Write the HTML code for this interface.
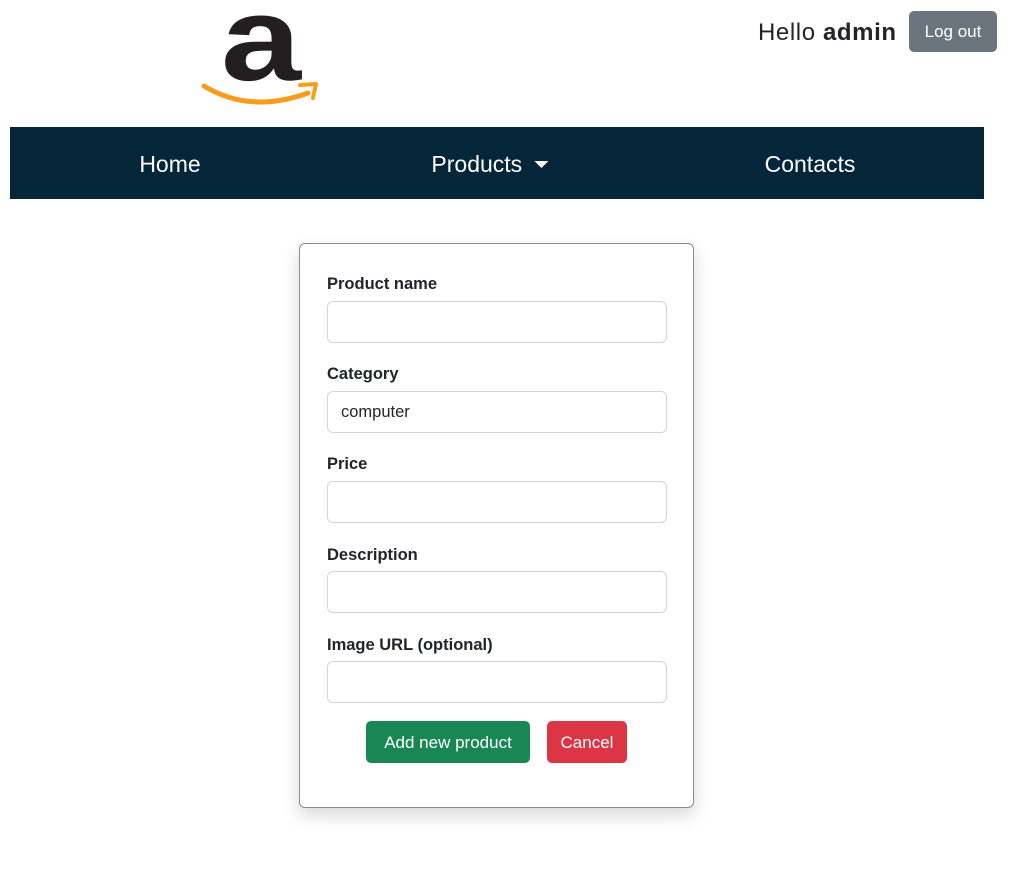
<!DOCTYPE html>
<html><head><style>
*{box-sizing:border-box;margin:0;padding:0}
body{width:1028px;height:884px;background:#fff;font-family:"Liberation Sans",sans-serif;color:#212529;position:relative;overflow:hidden}
.abs{position:absolute}
.nav{left:10px;top:127px;width:974px;height:72px;background:#052639}
.nav span{position:absolute;top:24px;color:#fff;font-size:23px;transform:translateX(-50%);white-space:nowrap}
.card{left:299px;top:243px;width:395px;height:565px;border:1px solid #8a8a8a;border-radius:6px;box-shadow:0 8px 18px rgba(0,0,0,.15);background:#fff}
.lbl{position:absolute;left:27px;font-weight:bold;font-size:16.5px}
.inp{position:absolute;left:27px;width:340px;height:42px;border:1px solid #ced4da;border-radius:6px;font-size:16.5px;padding:11px 13px}
.btn{position:absolute;top:477px;height:42px;border-radius:5px;color:#fff;font-size:17px;line-height:43px;text-align:center}
</style></head><body>
<svg class="abs" style="left:190px;top:0" width="140" height="115">
<text x="0" y="80" text-anchor="middle" font-family="Liberation Sans" font-weight="bold" font-size="120" fill="#231f20" transform="translate(71,0) scale(1.2,1)">a</text>
<path d="M14 86 Q60 114 118 93" stroke="#f79c1c" stroke-width="5" fill="none" stroke-linecap="round"/>
<path d="M110 85 L126 84 L123 98" stroke="#f79c1c" stroke-width="4" fill="none" stroke-linecap="round" stroke-linejoin="round"/>
</svg>
<div class="abs" style="left:758px;top:19px;font-size:24px;letter-spacing:0.6px">Hello <b>admin</b></div>
<div class="abs" style="left:909px;top:11px;width:88px;height:41px;background:#6c757d;border-radius:5px;color:#fff;font-size:17px;line-height:41px;text-align:center">Log out</div>
<div class="abs nav">
<span style="left:160px">Home</span>
<span style="left:480px">Products <span style="position:relative;left:0;top:-4px;display:inline-block;width:0;height:0;border-left:7px solid transparent;border-right:7px solid transparent;border-top:7px solid #fff;transform:none;margin-left:6px"></span></span>
<span style="left:800px">Contacts</span>
</div>
<div class="abs card">
<div class="lbl" style="top:31px">Product name</div>
<div class="inp" style="top:57px"></div>
<div class="lbl" style="top:121px">Category</div>
<div class="inp" style="top:147px">computer</div>
<div class="lbl" style="top:211px">Price</div>
<div class="inp" style="top:237px"></div>
<div class="lbl" style="top:302px">Description</div>
<div class="inp" style="top:327px"></div>
<div class="lbl" style="top:392px">Image URL (optional)</div>
<div class="inp" style="top:417px"></div>
<div class="btn" style="left:66px;width:164px;background:#198754">Add new product</div>
<div class="btn" style="left:247px;width:80px;background:#dc3545">Cancel</div>
</div>
</body></html>
